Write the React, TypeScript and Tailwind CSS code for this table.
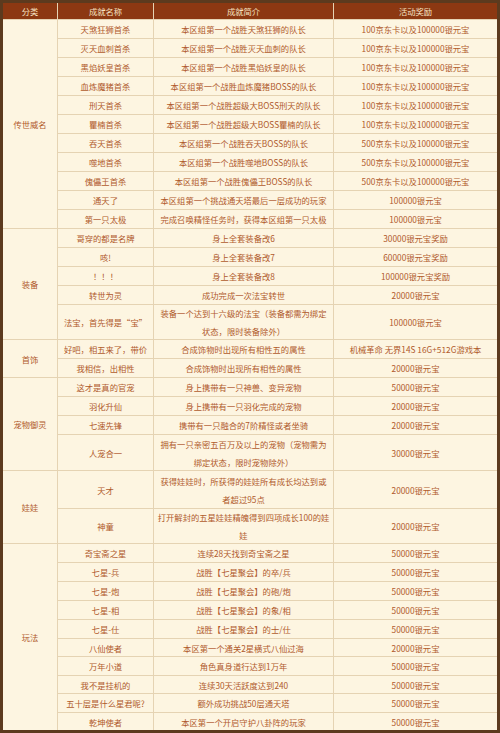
import React from 'react';

type Row = {
  name: string;
  intro: React.ReactNode;
  reward: string;
  h: string;
};

type Group = {
  cat: string;
  span: string;
  rows: Row[];
};

const r19 = 'h-[18px]';
const r18 = 'h-[17px]';

const groups: Group[] = [
  {
    cat: '传世威名',
    span: 'row-span-11',
    rows: [
      { name: '天煞狂狮首杀', intro: '本区组第一个战胜天煞狂狮的队长', reward: '100京东卡以及100000银元宝', h: r19 },
      { name: '灭天血刺首杀', intro: '本区组第一个战胜灭天血刺的队长', reward: '100京东卡以及100000银元宝', h: r19 },
      { name: '黑焰妖皇首杀', intro: '本区组第一个战胜黑焰妖皇的队长', reward: '100京东卡以及100000银元宝', h: r19 },
      { name: '血炼魔猪首杀', intro: '本区组第一个战胜血炼魔猪BOSS的队长', reward: '100京东卡以及100000银元宝', h: r19 },
      { name: '刑天首杀', intro: '本区组第一个战胜超级大BOSS刑天的队长', reward: '100京东卡以及100000银元宝', h: r19 },
      { name: '瞿楠首杀', intro: '本区组第一个战胜超级大BOSS瞿楠的队长', reward: '100京东卡以及100000银元宝', h: r19 },
      { name: '吞天首杀', intro: '本区组第一个战胜吞天BOSS的队长', reward: '500京东卡以及100000银元宝', h: r19 },
      { name: '噬地首杀', intro: '本区组第一个战胜噬地BOSS的队长', reward: '500京东卡以及100000银元宝', h: r19 },
      { name: '傀儡王首杀', intro: '本区组第一个战胜傀儡王BOSS的队长', reward: '500京东卡以及100000银元宝', h: r19 },
      { name: '通天了', intro: '本区组第一个挑战通天塔最后一层成功的玩家', reward: '100000银元宝', h: r19 },
      { name: '第一只太极', intro: '完成召唤精怪任务时，获得本区组第一只太极', reward: '100000银元宝', h: r19 },
    ],
  },
  {
    cat: '装备',
    span: 'row-span-5',
    rows: [
      { name: '哥穿的都是名牌', intro: '身上全套装备改6', reward: '30000银元宝奖励', h: r19 },
      { name: '咳!', intro: '身上全套装备改7', reward: '60000银元宝奖励', h: r19 },
      { name: '！！！', intro: '身上全套装备改8', reward: '100000银元宝奖励', h: r19 },
      { name: '转世为灵', intro: '成功完成一次法宝转世', reward: '20000银元宝', h: r19 },
      {
        name: '法宝，首先得是“宝”',
        intro: (
          <>
            装备一个达到十六级的法宝（装备都需为绑定
            <br />
            状态，限时装备除外）
          </>
        ),
        reward: '100000银元宝',
        h: 'h-[34px]',
      },
    ],
  },
  {
    cat: '首饰',
    span: 'row-span-2',
    rows: [
      { name: '好吧，相五来了，带价', intro: '合成饰物时出现所有相性五的属性', reward: '机械革命 无界14S 16G+512G游戏本', h: r19 },
      { name: '我相信，出相性', intro: '合成饰物时出现所有相性的属性', reward: '20000银元宝', h: r19 },
    ],
  },
  {
    cat: '宠物御灵',
    span: 'row-span-4',
    rows: [
      { name: '这才是真的官宠', intro: '身上携带有一只神兽、变异宠物', reward: '50000银元宝', h: r19 },
      { name: '羽化升仙', intro: '身上携带有一只羽化完成的宠物', reward: '20000银元宝', h: r19 },
      { name: '七速先锋', intro: '携带有一只融合的7阶精怪或者坐骑', reward: '20000银元宝', h: r19 },
      {
        name: '人宠合一',
        intro: (
          <>
            拥有一只亲密五百万及以上的宠物（宠物需为
            <br />
            绑定状态，限时宠物除外）
          </>
        ),
        reward: '30000银元宝',
        h: 'h-[35px]',
      },
    ],
  },
  {
    cat: '娃娃',
    span: 'row-span-2',
    rows: [
      {
        name: '天才',
        intro: (
          <>
            获得娃娃时，所获得的娃娃所有成长均达到或
            <br />
            者超过95点
          </>
        ),
        reward: '20000银元宝',
        h: 'h-[37px]',
      },
      {
        name: '神童',
        intro: (
          <>
            打开解封的五星娃娃精魄得到四项成长100的娃
            <br />
            娃
          </>
        ),
        reward: '20000银元宝',
        h: 'h-[34px]',
      },
    ],
  },
  {
    cat: '玩法',
    span: 'row-span-10',
    rows: [
      { name: '奇宝斋之星', intro: '连续28天找到奇宝斋之星', reward: '50000银元宝', h: r19 },
      { name: '七星-兵', intro: '战胜【七星聚会】的卒/兵', reward: '50000银元宝', h: r19 },
      { name: '七星-炮', intro: '战胜【七星聚会】的砲/炮', reward: '50000银元宝', h: r19 },
      { name: '七星-相', intro: '战胜【七星聚会】的象/相', reward: '50000银元宝', h: r19 },
      { name: '七星-仕', intro: '战胜【七星聚会】的士/仕', reward: '50000银元宝', h: r19 },
      { name: '八仙使者', intro: '本区第一个通关2星横式八仙过海', reward: '20000银元宝', h: r18 },
      { name: '万年小道', intro: '角色真身道行达到1万年', reward: '50000银元宝', h: r19 },
      { name: '我不是挂机的', intro: '连续30天活跃度达到240', reward: '50000银元宝', h: r18 },
      { name: '五十层是什么星君呢?', intro: '额外成功挑战50层通天塔', reward: '50000银元宝', h: r19 },
      { name: '乾坤使者', intro: '本区第一个开启守护八卦阵的玩家', reward: '50000银元宝', h: r18 },
    ],
  },
];

const headers = ['分类', '成就名称', '成就简介', '活动奖励'];

export default function App() {
  return (
    <div className="w-[500px] h-[733px] bg-[#fdf5e1] overflow-hidden">
      <div
        className="w-[500px] border-[3px] border-[#5c3a1e] text-[8.3px] leading-[18px] text-[#b05a2c] whitespace-nowrap"
        style={{ fontFamily: '"Noto Sans CJK SC", "Noto Sans", sans-serif' }}
      >
        <div className="grid grid-cols-[54px_95px_179px_1fr] gap-px bg-[#e5d3b3]">
          {headers.map((h) => (
            <div
              key={h}
              className="h-[16px] flex items-center justify-center bg-[#8c3812] text-[#f6e2c2]"
            >
              {h}
            </div>
          ))}
          {groups.map((g) => (
            <React.Fragment key={g.cat}>
              <div className={`${g.span} col-start-1 flex items-center justify-center bg-[#fdf5e1]`}>
                {g.cat}
              </div>
              {g.rows.map((row) => (
                <React.Fragment key={row.name}>
                  <div className={`${row.h} col-start-2 flex items-center justify-center bg-[#fdf5e1]`}>
                    {row.name}
                  </div>
                  <div className={`${row.h} flex items-center justify-center text-center bg-[#fdf5e1]`}>
                    <div>{row.intro}</div>
                  </div>
                  <div className={`${row.h} flex items-center justify-center bg-[#fdf5e1]`}>
                    {row.reward}
                  </div>
                </React.Fragment>
              ))}
            </React.Fragment>
          ))}
        </div>
      </div>
    </div>
  );
}
